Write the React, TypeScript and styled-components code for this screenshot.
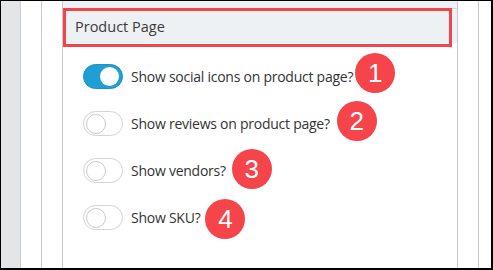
import styled, { createGlobalStyle } from 'styled-components';

const GlobalStyle = createGlobalStyle`
  html, body {
    margin: 0;
    padding: 0;
    background: #fff;
  }
  * {
    box-sizing: border-box;
  }
`;

interface Setting {
  label: string;
  on: boolean;
  badge: number;
  gap: number;
  lift: number;
}

const settings: Setting[] = [
  { label: 'Show social icons on product page?', on: true, badge: 1, gap: 2, lift: -4 },
  { label: 'Show reviews on product page?', on: false, badge: 2, gap: 7, lift: -3 },
  { label: 'Show vendors?', on: false, badge: 3, gap: 6, lift: -2 },
  { label: 'Show SKU?', on: false, badge: 4, gap: 5, lift: 1 },
];

function App() {
  return (
    <>
      <GlobalStyle />
      <Frame>
        <Column $w={20} $bg="#e4e5e7" />
        <Column $w={21} />
        <Column $w={21} />
        <Panel>
          <HeadTop />
          <Heading>Product Page</Heading>
          <Highlight />
          <List>
            {settings.map((s) => (
              <Row key={s.badge}>
                <Toggle $on={s.on}>
                  <Knob $on={s.on} />
                </Toggle>
                <Label>{s.label}</Label>
                <Badge $gap={s.gap} $lift={s.lift}>
                  {s.badge}
                </Badge>
              </Row>
            ))}
          </List>
        </Panel>
        <Column $w={21} />
        <Filler />
      </Frame>
    </>
  );
}

export default App;

const Frame = styled.div`
  display: flex;
  width: 493px;
  height: 270px;
  border-top: 1px solid #000;
  border-left: 1px solid #000;
  border-right: 2px solid #000;
  border-bottom: 2px solid #000;
  font-family: 'Open Sans', 'Noto Sans', sans-serif;
  color: #333;
  overflow: hidden;
`;

const Column = styled.div<{ $w: number; $bg?: string }>`
  flex: 0 0 ${(p) => p.$w}px;
  background: ${(p) => p.$bg || '#fff'};
  border-right: 1px solid #c8ccd1;
`;

const Filler = styled.div`
  flex: 1;
  background: #fff;
`;

const Panel = styled.div`
  position: relative;
  flex: 0 0 395px;
  border-right: 1px solid #c8ccd1;
  display: flex;
  flex-direction: column;
`;

const HeadTop = styled.div`
  height: 7px;
  background: #eef1f4;
`;

const Heading = styled.div`
  height: 35px;
  display: flex;
  align-items: center;
  padding: 0 0 0 12px;
  background: #eef1f4;
  border-top: 1px solid #d3d8dd;
  font-size: 14.5px;
  color: #3a3a3a;
`;

const Highlight = styled.div`
  position: absolute;
  left: 0;
  top: 7px;
  width: 389px;
  height: 39px;
  border: 3px solid #f5434a;
`;

const List = styled.div`
  display: flex;
  flex-direction: column;
  padding: 10px 0 0 20px;
`;

const Row = styled.div`
  height: 47px;
  display: flex;
  align-items: center;
`;

const Toggle = styled.div<{ $on: boolean }>`
  flex: 0 0 40px;
  height: 25px;
  border-radius: 13px;
  display: flex;
  align-items: center;
  justify-content: ${(p) => (p.$on ? 'flex-end' : 'flex-start')};
  padding: 0 3px 0 2px;
  background: ${(p) => (p.$on ? '#1f9fd5' : '#fff')};
  border: 1px solid ${(p) => (p.$on ? '#1b92c4' : '#d4d4d4')};
`;

const Knob = styled.div<{ $on: boolean }>`
  width: ${(p) => (p.$on ? 19 : 20)}px;
  height: ${(p) => (p.$on ? 19 : 20)}px;
  border-radius: 50%;
  background: #fff;
  border: ${(p) => (p.$on ? 'none' : '1px solid #c9c9c9')};
`;

const Label = styled.span`
  margin-left: 8px;
  font-size: 14px;
  letter-spacing: -0.25px;
  color: #333;
  white-space: nowrap;
`;

const Badge = styled.span<{ $gap: number; $lift: number }>`
  flex: 0 0 40px;
  height: 40px;
  margin-left: ${(p) => p.$gap}px;
  transform: translateY(${(p) => p.$lift}px);
  border-radius: 50%;
  background: #f5444a;
  color: #fff;
  display: flex;
  align-items: center;
  justify-content: center;
  font-family: 'Liberation Sans', Arial, sans-serif;
  font-size: 26px;
  line-height: 1;
`;
